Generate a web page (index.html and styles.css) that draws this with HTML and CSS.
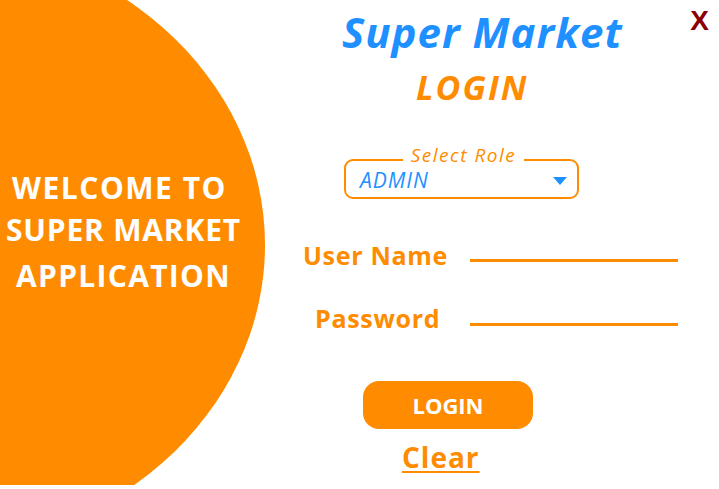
FILE: index.html
```html
<!DOCTYPE html>
<html lang="en">
<head>
<meta charset="utf-8">
<title>Super Market - Login</title>
<link rel="stylesheet" href="styles.css">
</head>
<body>
<div class="app">
  <aside class="welcome">
    <div class="welcome-line w1">WELCOME TO</div>
    <div class="welcome-line w2">SUPER MARKET</div>
    <div class="welcome-line w3">APPLICATION</div>
  </aside>
  <main class="form">
    <h1 class="brand">Super Market</h1>
    <h2 class="subtitle">LOGIN</h2>
    <fieldset class="role">
      <legend class="role-legend">Select Role</legend>
      <div class="role-select">
        <span class="role-value">ADMIN</span>
        <svg class="caret" width="14" height="8" viewBox="0 0 14 8"><path d="M0 0 H14 L7 8 Z" fill="#1E90FF"/></svg>
      </div>
    </fieldset>
    <div class="field user">
      <label class="field-label">User Name</label>
      <div class="field-line"></div>
    </div>
    <div class="field pass">
      <label class="field-label">Password</label>
      <div class="field-line"></div>
    </div>
    <button class="login-btn">LOGIN</button>
    <a class="clear">Clear</a>
  </main>
  <button class="close">X</button>
</div>
</body>
</html>
```
FILE: styles.css
```css
* { box-sizing: border-box; }
html, body { margin: 0; padding: 0; background: #fff; }
body { font-family: "Open Sans", "DejaVu Sans", sans-serif; }

.app {
  position: relative;
  width: 719px;
  height: 485px;
  overflow: hidden;
  display: grid;
  grid-template-columns: 244px 1fr;
}

/* left orange panel */
.welcome {
  position: relative;
  z-index: 0;
  display: flex;
  flex-direction: column;
  align-items: center;
  padding: 167px 0 0 3px;
  color: #fff;
  font-weight: 700;
  font-size: 30px;
}
.welcome::before {
  content: "";
  position: absolute;
  z-index: -1;
  left: -435px;
  top: -63px;
  width: 700px;
  height: 616px;
  border-radius: 50%;
  background: #FF8C00;
}
.welcome-line { line-height: 42px; white-space: nowrap; }
.w1 { letter-spacing: 1.5px; margin-left: -8px; }
.w2 { letter-spacing: 0.8px; }
.w3 { letter-spacing: 1.3px; margin-top: 4px; }

/* right form */
.form {
  display: flex;
  flex-direction: column;
  align-items: flex-start;
}
.brand {
  margin: 11px 0 0 98px;
  font-size: 42px;
  line-height: 42px;
  letter-spacing: 1px;
  font-style: italic;
  font-weight: 700;
  color: #1E90FF;
}
.subtitle {
  margin: 17px 0 0 172px;
  font-size: 34px;
  line-height: 34px;
  letter-spacing: 2px;
  font-style: italic;
  font-weight: 700;
  color: #FF8C00;
}

.role {
  margin: 44px 0 0 100px;
  padding: 0 10px 0 14px;
  width: 235px;
  min-width: 0;
  border: 2px solid #FF8C00;
  border-radius: 9px;
}
.role-legend {
  margin: 0 auto;
  padding: 0 8px 10px;
  font-size: 19px;
  line-height: 14px;
  letter-spacing: 1.5px;
  font-style: italic;
  color: #FF8C00;
}
.role-select {
  display: flex;
  align-items: center;
  justify-content: space-between;
  height: 35px;
  margin-top: -10px;
}
.role-value {
  font-size: 21px;
  letter-spacing: 1px;
  font-style: italic;
  color: #1E90FF;
}
.caret { margin-top: 3px; }

.field {
  display: grid;
  grid-template-columns: 226px 208px;
  height: 30px;
}
.field.user { margin-top: 41px; }
.field.pass { margin-top: 33px; }
.field-label {
  font-size: 25px;
  line-height: 30px;
  letter-spacing: 0.7px;
  font-weight: 700;
  color: #FF8C00;
  white-space: nowrap;
}
.user .field-label { margin-left: 59px; }
.pass .field-label { margin-left: 71px; }
.field-line {
  align-self: start;
  margin-top: 19px;
  height: 3px;
  background: #FF8C00;
}
.pass .field-line { margin-top: 20px; }

.login-btn {
  margin: 48px 0 0 119px;
  width: 170px;
  height: 48px;
  border: none;
  border-radius: 16px;
  background: #FF8C00;
  color: #fff;
  font-family: inherit;
  font-size: 22px;
  font-weight: 700;
  padding: 0;
}
.clear {
  margin: 13px 0 0 158px;
  font-size: 28px;
  line-height: 30px;
  letter-spacing: 1px;
  font-weight: 700;
  color: #FF8C00;
  text-decoration: underline;
  text-decoration-thickness: 2px;
  text-underline-offset: 3px;
}

.close {
  position: absolute;
  top: 6px;
  right: 10px;
  border: none;
  background: transparent;
  padding: 0;
  font-family: "Liberation Sans", sans-serif;
  font-size: 28px;
  line-height: 30px;
  font-weight: 700;
  color: #8B0000;
}
```
